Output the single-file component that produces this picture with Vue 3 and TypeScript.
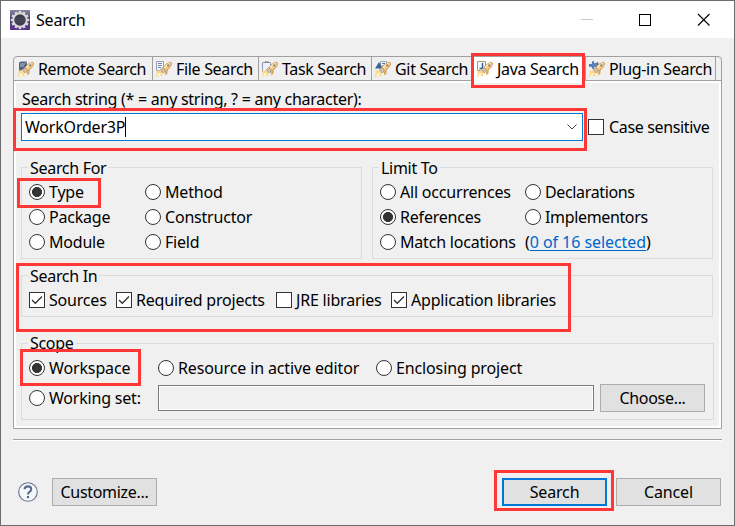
<script setup lang="ts">
import { ref } from 'vue'

interface Tab { kind: string; label: string; width: number; pad: number; gap: number }
interface Option { label: string; on?: boolean }

const tabs: Tab[] = [
  { kind: 'remote', label: 'Remote Search', width: 139, pad: 4, gap: 4 },
  { kind: 'file', label: 'File Search', width: 106, pad: 3, gap: 4 },
  { kind: 'task', label: 'Task Search', width: 113, pad: 3, gap: 4 },
  { kind: 'git', label: 'Git Search', width: 101, pad: 3, gap: 4 },
  { kind: 'java', label: 'Java Search', width: 113, pad: 4, gap: 4 },
  { kind: 'plugin', label: 'Plug-in Search', width: 130, pad: 3, gap: 4 },
]
const active = ref('java')
const query = ref('WorkOrder3P')

const searchFor: Option[] = [
  { label: 'Type', on: true }, { label: 'Method' },
  { label: 'Package' }, { label: 'Constructor' },
  { label: 'Module' }, { label: 'Field' },
]
const limitTo: Option[] = [
  { label: 'All occurrences' }, { label: 'Declarations' },
  { label: 'References', on: true }, { label: 'Implementors' },
  { label: 'Match locations' },
]
const searchIn: Option[] = [
  { label: 'Sources', on: true }, { label: 'Required projects', on: true },
  { label: 'JRE libraries' }, { label: 'Application libraries', on: true },
]
const teeth = Array.from({ length: 12 }, (_, i) => i * 30)
</script>

<template>
  <main class="window">
    <header class="titlebar">
      <svg class="logo" viewBox="0 0 20 20">
        <defs>
          <linearGradient id="lg" x1="0" y1="0" x2="0" y2="1">
            <stop offset="0" stop-color="#8d84a5" /><stop offset=".45" stop-color="#4a3f70" /><stop offset="1" stop-color="#5a3392" />
          </linearGradient>
        </defs>
        <rect width="20" height="20" fill="url(#lg)" />
        <g fill="#dedbdc">
          <rect v-for="a in teeth" :key="a" x="8.8" y="0.8" width="2.4" height="3.4" :transform="`rotate(${a} 10 10)`" />
        </g>
        <circle cx="10" cy="10" r="6.7" fill="#3b3c4d" stroke="#dcdad8" stroke-width="1.9" />
        <path d="M5 8.5h10M4.8 10.5h10.4M5.5 12.5h9" stroke="#4d4f62" stroke-width=".7" />
      </svg>
      <span class="title">Search</span>
      <svg class="controls" viewBox="0 0 140 16">
        <path d="M8 7.5h12" stroke="#c8c8c8" />
        <rect x="66.5" y="2.5" width="11" height="11" fill="none" stroke="#000" />
        <path d="M125 2l11.5 11.5M136.5 2L125 13.5" stroke="#000" stroke-width="1.1" />
      </svg>
    </header>

    <section class="folder">
      <nav class="tabs">
        <div
          v-for="t in tabs" :key="t.kind" class="tab" :class="[t.kind, { active: t.kind === active }]"
          :style="{ width: t.width + 'px', paddingLeft: t.pad + 'px', gap: t.gap + 'px' }"
          @click="active = t.kind"
        >
          <svg class="tab-icon" viewBox="0 0 16 16">
            <g v-if="t.kind === 'remote'">
              <path d="M1 1.5l2-1h6v7l-2 2H1z" fill="#53627b" /><path d="M2 3h5M2 5h4" stroke="#b9c5da" /><path d="M7 2l2-1" stroke="#94a0b5" />
            </g>
            <g v-else-if="t.kind === 'file'">
              <path d="M.5.5h7v9h-7z" fill="#f4f6fb" stroke="#9aa2b2" /><path d="M2 2.5h4M2 4.5h4M2 6.5h3" stroke="#6c87bd" />
            </g>
            <g v-else-if="t.kind === 'task'">
              <path d="M.5 1.5h8v9h-8z" fill="#eef2fb" stroke="#8c9abc" /><path d="M2.5 1.5L4 .2h1.5L7 1.5z" fill="#c5b585" stroke="#7d7b73" stroke-width=".6" />
            </g>
            <g v-else-if="t.kind === 'git'">
              <path d="M5.5.5h6v7h-6z" fill="#eef1f8" stroke="#9ca6b8" /><path d="M0 7.5L4 1l4 6.5z" fill="#3c668f" /><path d="M7 2.5h3M7.5 4.5h3" stroke="#5c79a5" />
            </g>
            <g v-else-if="t.kind === 'java'">
              <path d="M.5.5h8v9h-8z" fill="#f7fafd" stroke="#a79973" /><path d="M5.5 2v4q0 2-3 1.5" fill="none" stroke="#2d6194" stroke-width="1.5" />
            </g>
            <g v-else>
              <path d="M4 0l1.5 3L9 1.5v5L5.5 5 4 8 2.5 5 0 5.5v-2h3z" fill="#5e85bf" stroke="#3d629e" stroke-width=".7" /><path d="M8 4h3" stroke="#688554" stroke-width="1.4" />
            </g>
            <path d="M0 16l.8-4.5L0 9.5l3 .6L4.5 8l3 3.5L6 13l.5 2.5L4 14.4z" fill="#fbd583" /><path d="M.8 15.4l1.7-4 2.8 1.6-1.3 1.2z" fill="#fff8cf" />
            <path d="M4.5 8.5l2.5-2 2.5 2.7L7.5 12z" fill="#d0c5bc" stroke="#8d7f76" stroke-width=".6" />
            <path d="M7 6.5Q10 2 14.5 1.2q1.2.3 1 2Q14.5 7 9.7 10z" fill="#f3c888" stroke="#c8944c" stroke-width=".9" />
            <path d="M8.3 6.6Q10.5 3.6 13.6 2.4" stroke="#fff0c7" stroke-width="1.3" fill="none" />
            <circle cx="12.2" cy="4.4" r="1.1" fill="#857c70" /><path d="M10 9.5l1.8-.8-.4 3.8-2 2-.4-3z" fill="#d9a55c" />
          </svg>
          <span>{{ t.label }}</span>
        </div>
      </nav>

      <div class="page">
        <label class="prompt">Search string (* = any string, ? = any character):</label>
        <div class="query-row">
          <div class="combo">
            <span class="query">{{ query }}</span><i class="caret"></i>
            <svg class="chevron" viewBox="0 0 10 6"><path d="M.5.5L5 5 9.5.5" fill="none" stroke="#444" /></svg>
          </div>
          <div class="option case"><i class="check"></i><span>Case sensitive</span></div>
        </div>

        <div class="pair">
          <section class="group radios for">
            <h2>Search For</h2>
            <div v-for="o in searchFor" :key="o.label" class="option">
              <i class="radio" :class="{ on: o.on }"></i><span>{{ o.label }}</span>
            </div>
          </section>
          <section class="group radios limit">
            <h2>Limit To</h2>
            <div v-for="o in limitTo" :key="o.label" class="option">
              <i class="radio" :class="{ on: o.on }"></i><span>{{ o.label }}</span>
            </div>
            <div class="option selected-count"><span>(<a>0 of 16 selected</a>)</span></div>
          </section>
        </div>

        <section class="group search-in">
          <h2>Search In</h2>
          <div v-for="o in searchIn" :key="o.label" class="option">
            <i class="check"><svg v-if="o.on" viewBox="0 0 14 14"><path d="M2 7l3.3 3.3L12 3.5" fill="none" stroke="#333" stroke-width="1.3" /></svg></i><span>{{ o.label }}</span>
          </div>
        </section>

        <section class="group scope">
          <h2>Scope</h2>
          <div class="scope-row">
            <div class="option"><i class="radio on"></i><span>Workspace</span></div>
            <div class="option"><i class="radio"></i><span>Resource in active editor</span></div>
            <div class="option"><i class="radio"></i><span>Enclosing project</span></div>
          </div>
          <div class="set-row">
            <div class="option"><i class="radio"></i><span>Working set:</span></div>
            <div class="set-field"></div>
            <button class="choose">Choose...</button>
          </div>
        </section>
      </div>
    </section>

    <footer class="footer">
      <svg class="help" viewBox="0 0 20 20">
        <circle cx="10" cy="10" r="9.3" fill="#f5f7fa" stroke="#64748f" stroke-width="1.1" />
        <path d="M6.6 7.2Q6.8 4.4 10 4.4t3.2 2.8Q13.2 8.8 11.5 9.8 10 10.7 10 12.6" fill="none" stroke="#566a8c" stroke-width="2.1" />
        <rect x="8.9" y="14" width="2.2" height="2.2" fill="#566a8c" />
      </svg>
      <button class="customize">Customize...</button>
      <button class="primary">Search</button>
      <button>Cancel</button>
    </footer>

    <div class="mark mark-tab"></div>
    <div class="mark mark-query"></div>
    <div class="mark mark-type"></div>
    <div class="mark mark-in"></div>
    <div class="mark mark-workspace"></div>
    <div class="mark mark-search"></div>
  </main>
</template>

<style>
body { margin: 0; overflow: hidden; }
</style>

<style scoped>
* { box-sizing: border-box; }
.window { position: relative; width: 735px; height: 526px; display: flex; flex-direction: column; background: #f0f0f0; border: 1px solid #6c6c6e; font: 16px/22px "Noto Sans", "Open Sans", sans-serif; letter-spacing: -0.2px; color: #000; white-space: nowrap; }
.titlebar { height: 37px; flex: none; background: #fff; display: flex; align-items: center; padding-left: 9px; }
.logo { width: 20px; height: 20px; margin-right: 6px; }
.title { flex: 1; }
.controls { width: 140px; height: 16px; margin-right: 21px; }
.folder { width: 709px; height: 373px; margin: 18px 0 0 12px; flex: none; border: 1px solid #a0a0a0; border-radius: 4px 4px 0 0; overflow: hidden; }
.tabs { display: flex; height: 24px; border-bottom: 1px solid #a0a0a0; letter-spacing: -0.32px; }
.tab { display: flex; align-items: center; height: 23px; padding-top: 1px; border-right: 1px solid #a0a0a0; flex: none; }
.tab.remote { letter-spacing: -0.4px; }
.tab.active { background: #fff; height: 24px; padding-top: 0; }
.tab-icon { width: 16px; height: 16px; flex: none; }
.page { height: 347px; border: 2px solid #fff; padding: 5px 5px 0; }
.prompt { display: block; height: 25px; padding-left: 1px; line-height: 22px; letter-spacing: -0.27px; }
.query-row { display: flex; height: 28px; gap: 5px; align-items: center; }
.combo { width: 562px; height: 28px; border: 1px solid #0078d7; background: #fff; display: flex; align-items: center; padding: 0 5px 0 3px; }
.query { margin-top: -1px; }
.caret { width: 1px; height: 20px; background: #000; }
.chevron { width: 10px; height: 6px; margin-left: auto; }
.option { display: flex; align-items: center; gap: 4px; height: 25px; }
.case { letter-spacing: -0.35px; gap: 5px; }
.radio { width: 16px; height: 16px; flex: none; border: 1px solid #333; border-radius: 50%; background: #fff; }
.radio.on { background: radial-gradient(circle, #333 4.7px, #fff 5.3px); }
.check { width: 16px; height: 16px; flex: none; border: 1px solid #333; background: #fff; display: flex; }
.check svg { width: 14px; height: 14px; }
.pair { display: flex; gap: 10px; margin-top: 26px; }
.group { border: 1px solid #dcdcdc; padding: 0 7px; }
h2 { font: inherit; height: 22px; margin: -11px 0 0 -1px; padding: 0 2px; background: #f0f0f0; grid-column: 1 / -1; width: max-content; letter-spacing: -0.3px; }
.radios { width: 341px; height: 92px; display: grid; grid-template-columns: 116px 1fr; grid-template-rows: 22px repeat(3, 25px); }
.radios .option { margin-top: -11px; }
.limit { grid-template-columns: 145px 1fr; }
.radios .selected-count { letter-spacing: -0.06px; }
.limit .option:nth-child(odd):not(.selected-count) { letter-spacing: -0.35px; }
a { color: #0066cc; text-decoration: underline; text-underline-offset: 2px; }
.search-in { width: 692px; height: 42px; margin-top: 16px; display: grid; grid-template-columns: 87px 160px 115px 1fr; grid-template-rows: 11px 25px; }
.scope { width: 693px; height: 77px; margin-top: 26px; }
.scope h2 { margin-top: -12px; }
.scope-row { display: grid; grid-template-columns: 129px 218px 1fr; height: 30px; padding-top: 1px; letter-spacing: -0.13px; }
.set-row { display: flex; align-items: center; }
.set-row .option { width: 129px; }
.set-field { width: 436px; height: 26px; border: 1px solid #7a7a7a; box-shadow: inset 0 0 0 1px #fff; margin-right: 6px; }
button { font: inherit; letter-spacing: -0.15px; color: #000; width: 105px; height: 28px; padding: 0; border: 1px solid #adadad; background: #e1e1e1; }
.customize, .choose { letter-spacing: -0.3px; }
.footer { width: 709px; margin: 10px 0 0 12px; border-top: 1px solid #a0a0a0; box-shadow: inset 0 1px #fff; height: 67px; padding: 38px 1px 0 5px; display: flex; align-items: center; }
.help { width: 20px; height: 20px; margin-right: 14px; }
.primary { border: 2px solid #0078d7; margin: 0 9px 0 auto; }
.mark { position: absolute; border: 3px solid #ff3737; pointer-events: none; }
.mark-tab { left: 470px; top: 52px; width: 114px; height: 35px; }
.mark-query { left: 12px; top: 107px; width: 574px; height: 43px; }
.mark-type { left: 16px; top: 177px; width: 84px; height: 30px; }
.mark-in { left: 15px; top: 262px; width: 555px; height: 69px; }
.mark-workspace { left: 19px; top: 348px; width: 121px; height: 37px; }
.mark-search { left: 493px; top: 469px; width: 120px; height: 41px; }
</style>
